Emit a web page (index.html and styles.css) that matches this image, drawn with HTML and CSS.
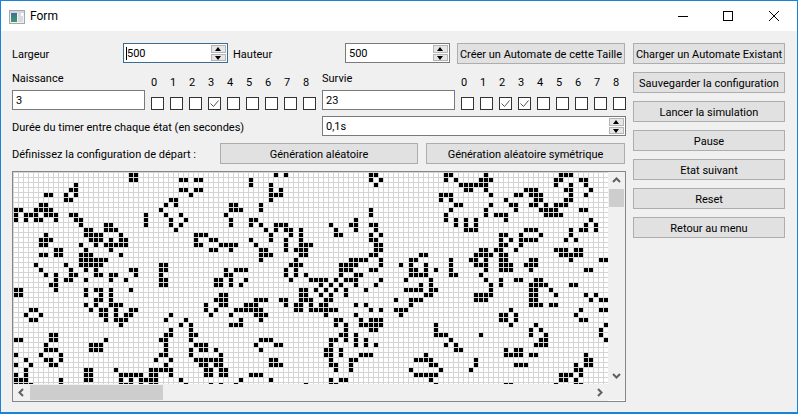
FILE: index.html
```html
<!DOCTYPE html>
<html lang="fr">
<head>
<meta charset="utf-8">
<title>Form</title>
<link rel="stylesheet" href="styles.css">
</head>
<body>
<div class="window">
  <header class="titlebar">
    <svg class="app-icon" width="16" height="14" viewBox="0 0 16 14"><defs><linearGradient id="iconfill" x1="0" y1="0" x2="0" y2="1"><stop offset="0" stop-color="#3f6f96"/><stop offset="1" stop-color="#3f9a6a"/></linearGradient></defs><rect x=".5" y=".5" width="15" height="13" fill="#f2f2f2" stroke="#a8a8a8"/><rect x="1" y="1" width="14" height="2" fill="#cfd6dc"/><rect x="2" y="3" width="6" height="9" fill="url(#iconfill)"/><rect x="9" y="3" width="5" height="9" fill="#d8dce0"/><rect x="12" y="3" width="2" height="3" fill="#fff"/></svg>
    <span class="title">Form</span>
    <svg class="win-btn" width="10" height="10" viewBox="0 0 10 10"><path d="M0 5.5h10" stroke="#000" fill="none"/></svg>
    <svg class="win-btn win-max" width="10" height="10" viewBox="0 0 10 10"><rect x=".5" y=".5" width="9" height="9" stroke="#000" fill="none"/></svg>
    <svg class="win-btn win-close" width="10" height="10" viewBox="0 0 10 10"><path d="M0 0l10 10M10 0L0 10" stroke="#000" fill="none"/></svg>
  </header>
  <main class="content">
    <section class="form">
      <div class="row row-size">
        <label class="lbl w-largeur">Largeur</label>
        <div class="spin focused"><span class="val">500</span><i class="caret"></i><div class="spin-btns"><b class="up"></b><b class="down"></b></div></div>
        <label class="lbl w-hauteur">Hauteur</label>
        <div class="spin"><span class="val">500</span><div class="spin-btns"><b class="up"></b><b class="down"></b></div></div>
        <button class="btn w-creer">Créer un Automate de cette Taille</button>
      </div>
      <div class="row row-rules">
        <div class="rule">
          <div class="rule-text"><label class="lbl rule-lbl">Naissance</label><div class="edit"><span class="val">3</span></div></div>
          <div class="checks">
            <span>0</span><span>1</span><span>2</span><span>3</span><span>4</span><span>5</span><span>6</span><span>7</span><span>8</span>
            <i class="cb"></i><i class="cb"></i><i class="cb"></i><i class="cb on"><svg width="11" height="11" viewBox="0 0 11 11"><path d="M1.5 5.5l3 3 5-6" stroke="#555" fill="none"/></svg></i><i class="cb"></i><i class="cb"></i><i class="cb"></i><i class="cb"></i><i class="cb"></i>
          </div>
        </div>
        <div class="rule">
          <div class="rule-text"><label class="lbl rule-lbl">Survie</label><div class="edit"><span class="val">23</span></div></div>
          <div class="checks">
            <span>0</span><span>1</span><span>2</span><span>3</span><span>4</span><span>5</span><span>6</span><span>7</span><span>8</span>
            <i class="cb"></i><i class="cb"></i><i class="cb on"><svg width="11" height="11" viewBox="0 0 11 11"><path d="M1.5 5.5l3 3 5-6" stroke="#555" fill="none"/></svg></i><i class="cb on"><svg width="11" height="11" viewBox="0 0 11 11"><path d="M1.5 5.5l3 3 5-6" stroke="#555" fill="none"/></svg></i><i class="cb"></i><i class="cb"></i><i class="cb"></i><i class="cb"></i><i class="cb"></i>
          </div>
        </div>
      </div>
      <div class="row row-timer">
        <label class="lbl w-timer">Durée du timer entre chaque état (en secondes)</label>
        <div class="spin spin-wide"><span class="val">0,1s</span><div class="spin-btns"><b class="up"></b><b class="down"></b></div></div>
      </div>
      <div class="row row-gen">
        <label class="lbl w-def">Définissez la configuration de départ :</label>
        <button class="btn w-gen1">Génération aléatoire</button>
        <button class="btn w-gen2">Génération aléatoire symétrique</button>
      </div>
      <div class="board">
        <div class="board-top">
          <div class="viewport">
            <svg class="cells" width="595" height="212" viewBox="0 0 595 212">
              <defs>
                <pattern id="gridlines" width="5" height="5" patternUnits="userSpaceOnUse"><path d="M0 .5h5M.5 0v5" stroke="#d4d4d4" fill="none"/></pattern>
              </defs>
              <g transform="translate(1 1) scale(5)">
                <path stroke="#000" stroke-width="1" fill="none" d="
M23 .5h2M71 .5h2M86 .5h2M94 .5h1M109 .5h3M52 .5h1M54 .5h1
M23 1.5h2M33 1.5h2M36 1.5h2M47 1.5h1M71 1.5h1M73 1.5h1M86 1.5h1M88 1.5h1M93 1.5h3M108 1.5h2M113 1.5h2
M12 2.5h1M47 2.5h1M51 2.5h1M72 2.5h1M89 2.5h5M94 2.5h1M108 2.5h1M111 2.5h1M114 2.5h1
M11 3.5h2M33 3.5h2M36 3.5h2M51 3.5h1M53 3.5h1M90 3.5h2M94 3.5h1M102 3.5h3M110 3.5h2M115 3.5h1
M6 4.5h2M10 4.5h1M12 4.5h1M35 4.5h1M51 4.5h3M85 4.5h3M95 4.5h1M100 4.5h2M103 4.5h3M111 4.5h1M114 4.5h1
M10 5.5h2M31 5.5h2M51 5.5h1M85 5.5h1M87 5.5h1M98 5.5h1M104 5.5h2M110 5.5h2
M5 6.5h2M30 6.5h1M32 6.5h1M43 6.5h2M49 6.5h1M88 6.5h2M95 6.5h1M99 6.5h2M103 6.5h2M106 6.5h1M108 6.5h3
M0 7.5h2M4 7.5h4M29 7.5h1M43 7.5h3M49 7.5h1M71 7.5h1M87 7.5h1M94 7.5h1M100 7.5h1M105 7.5h4M113 7.5h2
M0 8.5h1M2 8.5h1M3 8.5h2M6 8.5h1M7 8.5h2M11 8.5h2M26 8.5h1M30 8.5h1M33 8.5h1M42 8.5h1M71 8.5h1M86 8.5h1M94 8.5h1M96 8.5h3M106 8.5h4
M0 9.5h1M2 9.5h1M4 9.5h2M8 9.5h1M12 9.5h2M26 9.5h1M31 9.5h1M34 9.5h1M43 9.5h1M47 9.5h2M68 9.5h1M86 9.5h1M88 9.5h1M90 9.5h1M92 9.5h1M98 9.5h1M115 9.5h1
M13 10.5h1M18 10.5h2M26 10.5h1M31 10.5h1M33 10.5h1M43 10.5h1M47 10.5h1M49 10.5h1M52 10.5h3M63 10.5h1M67 10.5h2M71 10.5h2M88 10.5h1M90 10.5h1M92 10.5h1M114 10.5h1M116 10.5h1
M14 11.5h2M18 11.5h3M32 11.5h1M50 11.5h1M52 11.5h1M54 11.5h2M57 11.5h1M64 11.5h1M68 11.5h1M72 11.5h1M90 11.5h3M102 11.5h3M111 11.5h1M113 11.5h2M116 11.5h1
M6 12.5h1M14 12.5h4M21 12.5h1M36 12.5h3M51 12.5h1M55 12.5h1M57 12.5h1M64 12.5h2M71 12.5h1M73 12.5h1M97 12.5h2M101 12.5h1M105 12.5h1M111 12.5h1
M5 13.5h3M15 13.5h3M19 13.5h1M21 13.5h2M36 13.5h1M39 13.5h2M47 13.5h1M51 13.5h1M54 13.5h1M57 13.5h1M71 13.5h2M97 13.5h1M99 13.5h1M101 13.5h4M110 13.5h1M112 13.5h1
M5 14.5h2M13 14.5h1M16 14.5h1M18 14.5h1M19 14.5h2M21 14.5h2M36 14.5h2M41 14.5h4M48 14.5h1M54 14.5h1M57 14.5h3M72 14.5h2M97 14.5h2M101 14.5h1
M8 15.5h2M14 15.5h1M19 15.5h1M39 15.5h2M43 15.5h1M49 15.5h2M54 15.5h1M56 15.5h3M72 15.5h2M93 15.5h2M96 15.5h2M100 15.5h1M108 15.5h3M112 15.5h2
M5 16.5h2M8 16.5h2M13 16.5h3M21 16.5h1M49 16.5h3M57 16.5h2M71 16.5h2M81 16.5h2M92 16.5h4M97 16.5h2M109 16.5h5
M13 17.5h6M49 17.5h1M56 17.5h1M67 17.5h4M73 17.5h1M79 17.5h2M87 17.5h1M91 17.5h2M94 17.5h1M97 17.5h2M103 17.5h2M111 17.5h1M117 17.5h2
M4 18.5h1M10 18.5h1M13 18.5h5M29 18.5h2M55 18.5h3M65 18.5h4M73 18.5h1M77 18.5h1M79 18.5h1M82 18.5h1M87 18.5h1M92 18.5h2M94 18.5h1M97 18.5h3M102 18.5h3
M5 19.5h1M11 19.5h1M14 19.5h1M16 19.5h1M23 19.5h2M29 19.5h2M42 19.5h1M44 19.5h3M54 19.5h1M56 19.5h1M65 19.5h3M71 19.5h2M79 19.5h2M82 19.5h1M84 19.5h1M87 19.5h1M94 19.5h1M97 19.5h3M103 19.5h1M114 19.5h2
M6 20.5h1M8 20.5h1M11 20.5h2M16 20.5h2M19 20.5h2M24 20.5h1M29 20.5h1M42 20.5h2M54 20.5h1M56 20.5h1M58 20.5h1M65 20.5h1M68 20.5h2M79 20.5h4M87 20.5h2M93 20.5h1
M8 21.5h1M10 21.5h2M14 21.5h1M19 21.5h1M22 21.5h1M29 21.5h2M40 21.5h2M43 21.5h1M46 21.5h1M55 21.5h1M59 21.5h4M64 21.5h1M66 21.5h3M73 21.5h1M78 21.5h1M83 21.5h1M94 21.5h1M97 21.5h1M100 21.5h2M104 21.5h2
M7 22.5h2M29 22.5h2M40 22.5h2M43 22.5h1M45 22.5h1M61 22.5h1M63 22.5h1M65 22.5h1M68 22.5h1M72 22.5h1M81 22.5h1M83 22.5h1M95 22.5h1M97 22.5h1M103 22.5h1M104 22.5h2M106 22.5h1M111 22.5h2
M0 23.5h2M8 23.5h1M14 23.5h1M16 23.5h2M19 23.5h1M23 23.5h1M57 23.5h2M60 23.5h1M62 23.5h1M64 23.5h1M66 23.5h1M70 23.5h1M78 23.5h4M83 23.5h2M95 23.5h1M103 23.5h1M104 23.5h1M107 23.5h1
M0 24.5h2M14 24.5h1M17 24.5h1M19 24.5h1M41 24.5h2M57 24.5h2M61 24.5h1M63 24.5h1M66 24.5h1M82 24.5h2M92 24.5h4M103 24.5h2M108 24.5h1M114 24.5h1M116 24.5h1
M16 25.5h2M19 25.5h1M40 25.5h3M48 25.5h3M53 25.5h2M57 25.5h3M62 25.5h2M76 25.5h1M79 25.5h3M92 25.5h3M103 25.5h2M115 25.5h1M117 25.5h2
M14 26.5h1M16 26.5h1M19 26.5h3M38 26.5h1M41 26.5h2M46 26.5h3M54 26.5h1M56 26.5h2M59 26.5h1M61 26.5h2M68 26.5h1M70 26.5h1M79 26.5h1M103 26.5h3M107 26.5h2
M3 27.5h2M15 27.5h1M17 27.5h2M20 27.5h1M23 27.5h2M38 27.5h1M40 27.5h1M44 27.5h6M56 27.5h2M59 27.5h6M71 27.5h1M73 27.5h1M76 27.5h3M99 27.5h1M113 27.5h1M117 27.5h2
M2 28.5h1M5 28.5h1M17 28.5h2M20 28.5h1M22 28.5h2M31 28.5h1M39 28.5h1M43 28.5h1M48 28.5h3M62 28.5h1M68 28.5h1M77 28.5h1M97 28.5h2M100 28.5h1M112 28.5h1
M3 29.5h2M18 29.5h1M20 29.5h3M30 29.5h1M34 29.5h1M45 29.5h1M49 29.5h1M64 29.5h2M69 29.5h1M71 29.5h3M97 29.5h2M100 29.5h1M113 29.5h2
M21 30.5h1M33 30.5h1M35 30.5h1M43 30.5h3M64 30.5h1M66 30.5h1M69 30.5h5M84 30.5h1M99 30.5h1M104 30.5h1M118 30.5h1
M31 31.5h1M35 31.5h1M66 31.5h1M71 31.5h2M84 31.5h1M103 31.5h1M105 31.5h1M117 31.5h1
M7 32.5h2M30 32.5h2M35 32.5h2M65 32.5h2M68 32.5h1M84 32.5h3M93 32.5h1M103 32.5h1M106 32.5h1M117 32.5h1
M0 33.5h2M7 33.5h2M18 33.5h1M29 33.5h2M35 33.5h1M49 33.5h3M63 33.5h2M66 33.5h1M68 33.5h1M70 33.5h1M87 33.5h1M105 33.5h2M118 33.5h1
M6 34.5h1M15 34.5h3M30 34.5h1M36 34.5h3M48 34.5h1M52 34.5h2M63 34.5h1M68 34.5h1M70 34.5h1M72 34.5h1M86 34.5h1M88 34.5h1M104 34.5h3
M6 35.5h3M15 35.5h3M30 35.5h1M35 35.5h1M37 35.5h2M40 35.5h1M49 35.5h1M62 35.5h2M65 35.5h1M88 35.5h2M98 35.5h1M100 35.5h2
M0 36.5h1M5 36.5h1M9 36.5h1M29 36.5h2M35 36.5h1M41 36.5h1M62 36.5h2M65 36.5h1M69 36.5h3M82 36.5h1M98 36.5h4M103 36.5h2M114 36.5h1
M2 37.5h1M6 37.5h2M9 37.5h1M28 37.5h1M31 37.5h1M36 37.5h6M51 37.5h2M63 37.5h1M67 37.5h2M80 37.5h4M92 37.5h1M114 37.5h2
M0 38.5h1M3 38.5h1M7 38.5h2M30 38.5h1M37 38.5h2M40 38.5h2M51 38.5h3M63 38.5h2M67 38.5h1M83 38.5h2M92 38.5h1M100 38.5h3M112 38.5h1M114 38.5h2
M2 39.5h1M14 39.5h2M20 39.5h1M27 39.5h5M38 39.5h2M41 39.5h2M64 39.5h1M67 39.5h1M79 39.5h1M85 39.5h1M91 39.5h1M112 39.5h2
M0 40.5h1M2 40.5h1M14 40.5h2M21 40.5h5M27 40.5h2M31 40.5h1M38 40.5h2M41 40.5h2M47 40.5h3M80 40.5h5M109 40.5h3M113 40.5h1
M0 41.5h3M9 41.5h1M14 41.5h2M21 41.5h1M23 41.5h1M25 41.5h4M33 41.5h1M45 41.5h1M51 41.5h1M63 41.5h1M65 41.5h2M83 41.5h1M109 41.5h2M112 41.5h1
M0 42.5h4M9 42.5h1M21 42.5h2M23 42.5h1M25 42.5h1M27 42.5h2M34 42.5h1M39 42.5h1M41 42.5h1M44 42.5h1M58 42.5h1M63 42.5h2M84 42.5h1M98 42.5h2M108 42.5h1M112 42.5h2"/>
              </g>
              <rect width="595" height="212" fill="url(#gridlines)"/>
            </svg>
          </div>
          <div class="vscroll">
            <svg width="17" height="17" viewBox="0 0 17 17"><path d="M5 10l3.5-3.5L12 10" stroke="#606060" stroke-width="2" fill="none"/></svg>
            <i class="vthumb"></i>
            <svg class="arrow-end" width="17" height="17" viewBox="0 0 17 17"><path d="M5 7l3.5 3.5L12 7" stroke="#606060" stroke-width="2" fill="none"/></svg>
          </div>
        </div>
        <div class="hscroll">
          <svg width="17" height="17" viewBox="0 0 17 17"><path d="M10 5l-3.5 3.5L10 12" stroke="#606060" stroke-width="2" fill="none"/></svg>
          <i class="hthumb"></i>
          <svg class="arrow-end" width="17" height="17" viewBox="0 0 17 17"><path d="M7 5l3.5 3.5L7 12" stroke="#606060" stroke-width="2" fill="none"/></svg>
          <i class="corner"></i>
        </div>
      </div>
    </section>
    <aside class="actions">
      <button class="btn">Charger un Automate Existant</button>
      <button class="btn">Sauvegarder la configuration</button>
      <button class="btn">Lancer la simulation</button>
      <button class="btn">Pause</button>
      <button class="btn">Etat suivant</button>
      <button class="btn">Reset</button>
      <button class="btn">Retour au menu</button>
    </aside>
  </main>
</div>
</body>
</html>
```

FILE: styles.css
```css
* { box-sizing: border-box; }
html, body { margin: 0; padding: 0; }
body { width: 798px; height: 414px; overflow: hidden; font-family: Roboto, "Open Sans", sans-serif; font-size: 11px; color: #000; }
.window { width: 798px; height: 414px; border: 1px solid #1883d7; border-width: 1px 1px 2px 1px; background: #f0f0f0; display: flex; flex-direction: column; }
.titlebar { height: 30px; flex: none; background: #fff; display: flex; align-items: center; padding: 0 18px 0 8px; }
.app-icon { flex: none; margin-top: 1px; }
.title { margin-left: 5px; font-size: 12px; flex: 1; }
.win-btn { flex: none; margin-left: 35px; }
.win-close { margin-left: 36px; }
.content { display: flex; padding: 12px 0 0 11px; gap: 7px; }
.form { width: 614px; flex: none; }
.row { display: flex; }
.lbl { display: block; white-space: nowrap; }
.row-size { height: 21px; align-items: flex-start; }
.row-size .lbl { line-height: 23px; }
.w-largeur { width: 111px; }
.w-hauteur { width: 112px; margin-left: 5px; }
.w-creer { width: 168px; margin-left: 7px; }
.spin, .edit { position: relative; height: 20px; background: #fff; border: 1px solid #7a7a7a; display: flex; align-items: center; padding-left: 3px; }
.spin { width: 105px; }
.spin.focused { border-color: #3a6c96; }
.val { line-height: 18px; padding-top: 1px; }
.caret { position: absolute; left: 2px; top: 3px; width: 1px; height: 13px; background: #000; }
.spin-btns { position: absolute; right: 1px; top: 1px; bottom: 1px; width: 15px; display: flex; flex-direction: column; gap: 1px; }
.spin-btns b { flex: 1; background: #e6e6e6; border: 1px solid #b5b5b5; position: relative; }
.spin-btns b::after { content: ""; position: absolute; left: 3px; border: 3px solid transparent; }
.spin-btns .up::after { top: -2px; border-bottom: 4px solid #000; }
.spin-btns .down::after { top: 1px; border-top: 4px solid #000; }
.row-rules { margin-top: 7px; height: 39px; gap: 6px; }
.rule { display: flex; gap: 6px; }
.rule-text { width: 133px; }
.rule-lbl { height: 19px; line-height: 16px; }
.checks { display: grid; grid-template-columns: repeat(9, 13px); column-gap: 6px; grid-template-rows: 26px 13px; width: 165px; }
.checks span { text-align: left; line-height: 22px; padding-top: 1px; }
.cb { width: 13px; height: 13px; background: #fff; border: 1px solid #333; display: block; }
.cb svg { display: block; }
.row-timer { margin-top: 6px; height: 20px; align-items: center; }
.w-timer { width: 310px; padding-top: 2px; }
.spin-wide { width: 304px; }
.row-gen { margin-top: 7px; height: 21px; align-items: center; }
.w-def { width: 208px; padding-top: 2px; }
.w-gen1 { width: 198px; }
.w-gen2 { width: 199px; margin-left: 8px; }
.btn { height: 21px; padding: 2px 0 0; background: #e1e1e1; border: 1px solid #adadad; font: inherit; color: #000; white-space: nowrap; }
.board { margin-top: 7px; width: 614px; height: 231px; border: 1px solid #828790; display: flex; flex-direction: column; background: #f0f0f0; }
.board-top { display: flex; height: 212px; }
.viewport { width: 595px; height: 212px; background: #fff; overflow: hidden; }
.cells { display: block; }
.vscroll { width: 17px; display: flex; flex-direction: column; }
.vscroll svg { flex: none; display: block; }
.vthumb { display: block; width: 15px; margin-left: 1px; height: 18px; background: #cdcdcd; }
.vscroll .arrow-end { margin-top: auto; }
.hscroll { display: flex; height: 17px; align-items: center; position: relative; width: 612px; padding-right: 17px; }
.hscroll svg { flex: none; display: block; }
.hthumb { display: block; width: 133px; height: 15px; background: #cdcdcd; }
.hscroll .arrow-end { margin-left: auto; }
.corner { position: absolute; right: 0; bottom: 0; width: 17px; height: 1px; background: #fff; }
.actions { width: 152px; flex: none; display: flex; flex-direction: column; gap: 8px; }
```
